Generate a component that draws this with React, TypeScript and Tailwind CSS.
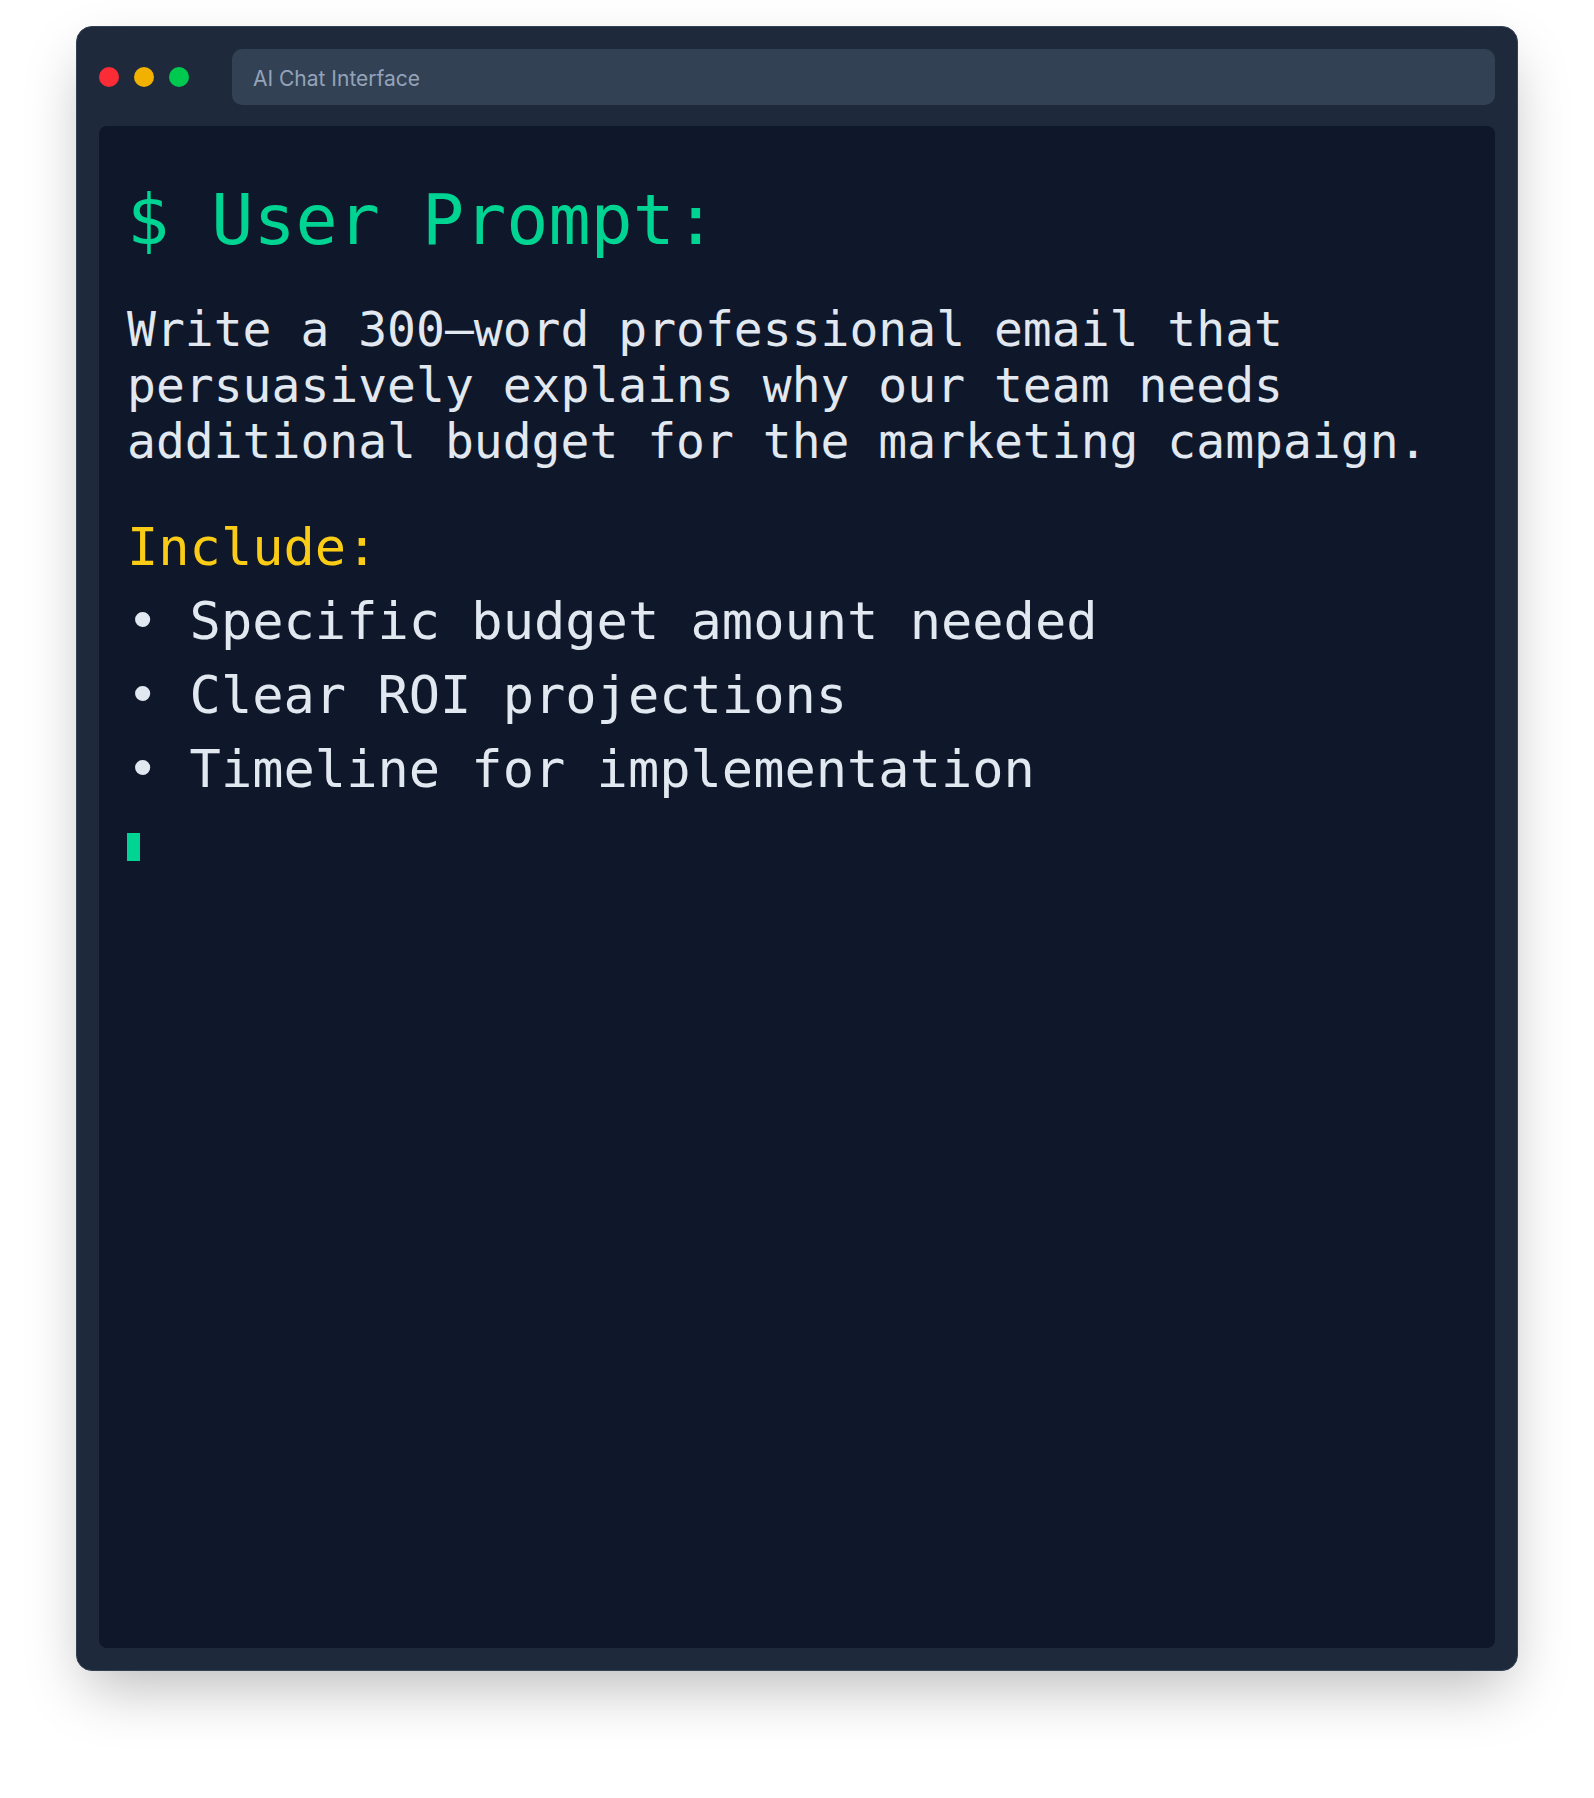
const mono = { fontFamily: '"DejaVu Sans Mono", "Liberation Mono", monospace' };

const BULLETS = [
  "Specific budget amount needed",
  "Clear ROI projections",
  "Timeline for implementation",
];

function TrafficLights() {
  return (
    <div className="flex items-center gap-[15px]">
      <span className="block h-5 w-5 rounded-full bg-[#fb2c36]" />
      <span className="block h-5 w-5 rounded-full bg-[#f0b100]" />
      <span className="block h-5 w-5 rounded-full bg-[#00c950]" />
    </div>
  );
}

export default function App() {
  return (
    <div className="min-h-[1798px] bg-white pt-[26px]">
      <div className="mx-auto w-[1442px] rounded-2xl border border-[#334155] bg-[#1e293b] p-[22px] shadow-[0_25px_60px_-10px_rgba(0,0,0,0.28)]">
        <div className="mb-[21px] flex h-14 items-center">
          <TrafficLights />
          <div
            className="ml-[43px] flex h-14 flex-1 items-center rounded-[10px] bg-[#334155] pl-[21px] pt-[4px] text-[21px] text-[#94a3b8]"
            style={{ fontFamily: 'Inter, "Noto Sans", sans-serif' }}
          >
            AI Chat Interface
          </div>
        </div>

        <div
          className="h-[1522px] rounded-lg bg-[#0f172a] px-[28px] pt-[53px]"
          style={mono}
        >
          <h1 className="mb-[40px] text-[70px] leading-[normal] text-[#00d492]">
            $ User Prompt:
          </h1>
          <p className="mb-[41px] text-[48px] leading-[normal] text-[#e2e8f0]">
            Write a 300–word professional email that
            <br />
            persuasively explains why our team needs
            <br />
            additional budget for the marketing campaign.
          </p>
          <div className="text-[52px] leading-[74px]">
            <div className="text-[#facc15]">Include:</div>
            {BULLETS.map((b) => (
              <div key={b} className="whitespace-pre text-[#e2e8f0]">
                {"• " + b}
              </div>
            ))}
          </div>
          <div className="mt-[27px] h-[28px] w-[13px] bg-[#00d492]" />
        </div>
      </div>
    </div>
  );
}
